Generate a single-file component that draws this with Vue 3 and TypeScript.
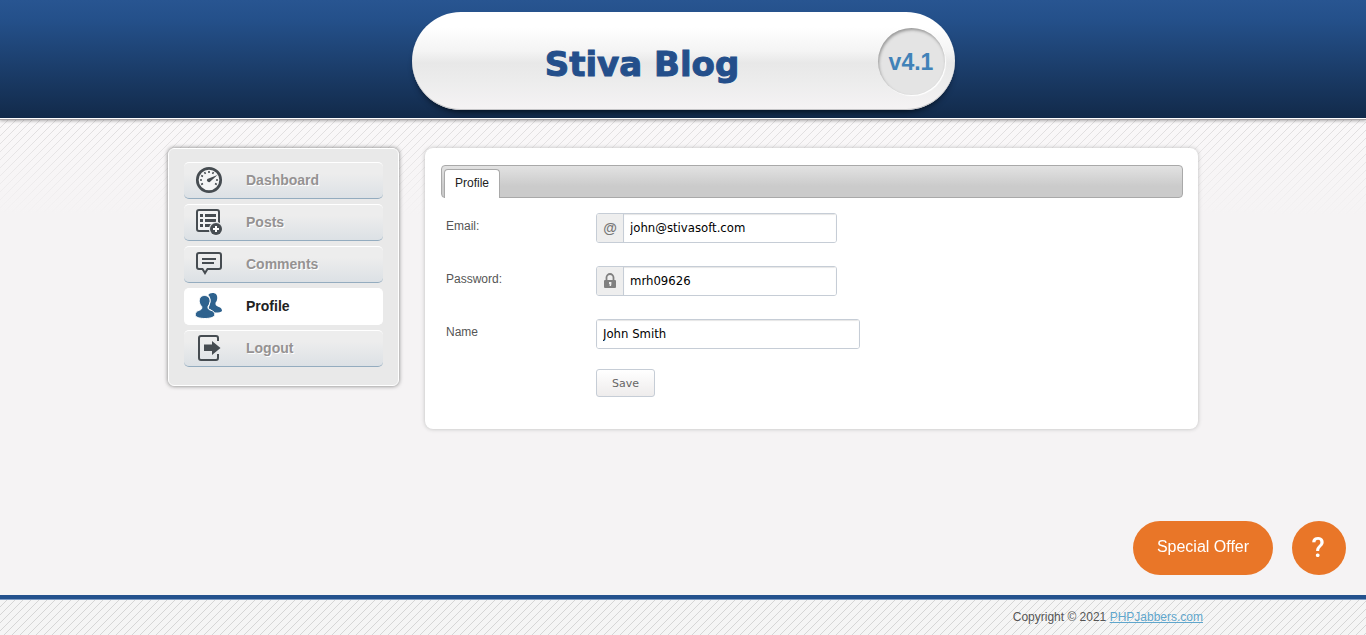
<script setup lang="ts">
import { reactive } from 'vue'

interface NavItem {
  id: string
  label: string
  active?: boolean
}

const navItems: NavItem[] = [
  { id: 'dashboard', label: 'Dashboard' },
  { id: 'posts', label: 'Posts' },
  { id: 'comments', label: 'Comments' },
  { id: 'profile', label: 'Profile', active: true },
  { id: 'logout', label: 'Logout' },
]

const ticks: number[] = [-120, -90, -60, -30, 0, 30, 90, 120]

const form = reactive({
  email: 'john@stivasoft.com',
  password: 'mrh09626',
  name: 'John Smith',
})
</script>

<template>
  <div class="page">
    <header class="header">
      <div class="banner">
        <h1 class="title">Stiva Blog</h1>
        <span class="version">v4.1</span>
      </div>
    </header>

    <div class="content">
      <nav class="sidebar" aria-label="Main menu">
        <a
          v-for="item in navItems"
          :key="item.id"
          :href="'#' + item.id"
          class="nav-item"
          :class="{ active: item.active }"
        >
          <svg v-if="item.id === 'dashboard'" class="nav-icon" viewBox="0 0 28 28" aria-hidden="true">
            <circle cx="14" cy="14" r="11.7" fill="#f4f5f6" stroke="#464c51" stroke-width="2.7" />
            <path
              v-for="t in ticks"
              :key="t"
              d="M14 5v2"
              stroke="#464c51"
              stroke-width="1.6"
              :transform="`rotate(${t} 14 14)`"
            />
            <path d="M12.3 13 22.5 8.900 15.600 15.300A2 2 0 1 1 12.300 13Z" fill="#464c51" />
          </svg>
          <svg v-else-if="item.id === 'posts'" class="nav-icon" viewBox="0 0 28 28" aria-hidden="true">
            <rect x="2" y="2" width="22" height="21" rx="2" fill="#f2f3f4" stroke="#464c51" stroke-width="2" />
            <path d="M5 6h3v3H5zM10 6h11v3H10zM5 11h3v3H5zM10 11h11v3H10zM5 16h3v3H5zM10 16h7v3h-7z" fill="#464c51" />
            <circle cx="21" cy="21" r="7.2" fill="#e4e6e8" />
            <circle cx="21" cy="21" r="6" fill="#464c51" />
            <path d="M21 18v6M18 21h6" stroke="#fff" stroke-width="2" />
          </svg>
          <svg v-else-if="item.id === 'comments'" class="nav-icon" viewBox="0 0 28 28" aria-hidden="true">
            <path
              d="M4 3h20a2 2 0 0 1 2 2v12a2 2 0 0 1-2 2H12.500l-2.500 4-2.500-4H4a2 2 0 0 1-2-2V5a2 2 0 0 1 2-2Z"
              fill="none"
              stroke="#464c51"
              stroke-width="2"
            />
            <path d="M7 9h14M7 13h12" stroke="#464c51" stroke-width="2" />
          </svg>
          <svg v-else-if="item.id === 'profile'" class="nav-icon" viewBox="0 0 28 28" aria-hidden="true">
            <path
              d="M17.500 1c3.500 0 5 2.200 4.700 5.500-.2 2-.7 3-1.700 4.300-.3 2.400.5 3.200 2.700 3.900 3 .9 3.800 2.300 3.800 4.300-1.300 1.300-4.500 1.900-8.500 1.500-1.500-2.600-3-3.200-5-4 .3-2 1.800-4 2-7 .2-2.800-.5-5-2.200-6.500C14 1.700 15.600 1 17.500 1Z"
              fill="#2e628e"
            />
            <path
              d="M9.500 3.500c3.800 0 5.800 2.500 5.500 6-.2 2-.9 3.500-2 5-.3 2.400.6 3 3 3.800 2.700.9 4 2.300 3.800 4.700-.1 2.200-4.800 3.500-9.800 3.500S.2 25.400.2 23c0-2.500 1.300-3.800 4-4.700 2.300-.8 3-1.600 2.500-3.800-1.500-1.500-2.200-3-2.400-5C4 6 5.800 3.500 9.500 3.500Z"
              fill="#2e628e"
              stroke="#fff"
              stroke-width="1"
            />
          </svg>
          <svg v-else class="nav-icon" viewBox="0 0 28 28" aria-hidden="true">
            <path
              d="M23 7V4a2 2 0 0 0-2-2H6a2 2 0 0 0-2 2v20a2 2 0 0 0 2 2h15a2 2 0 0 0 2-2v-4"
              fill="none"
              stroke="#464c51"
              stroke-width="2"
            />
            <path d="M9 10.500h8V7l8.500 7L17 21v-4H9Z" fill="#464c51" />
          </svg>
          <span>{{ item.label }}</span>
        </a>
      </nav>

      <main class="panel">
        <div class="tabs" role="tablist">
          <button type="button" class="tab" role="tab" aria-selected="true">Profile</button>
        </div>
        <form class="form" @submit.prevent>
          <div class="row">
            <label for="email">Email:</label>
            <div class="group">
              <span class="addon at" aria-hidden="true">@</span>
              <input id="email" v-model="form.email" type="text" />
            </div>
          </div>
          <div class="row">
            <label for="password">Password:</label>
            <div class="group">
              <span class="addon">
                <svg class="lock" viewBox="0 0 12 16" aria-hidden="true">
                  <path d="M2.500 7V4.500a3.500 3.500 0 0 1 7 0V7" fill="none" stroke="#808080" stroke-width="1.800" />
                  <rect x="0" y="7" width="12" height="8" rx="1" fill="#808080" />
                  <path d="M5 9h2.400v2L7 13H5.600V11H5Z" fill="#eee" />
                </svg>
              </span>
              <input id="password" v-model="form.password" type="text" />
            </div>
          </div>
          <div class="row">
            <label for="name">Name</label>
            <div class="group wide">
              <input id="name" v-model="form.name" type="text" />
            </div>
          </div>
          <button type="submit" class="save">Save</button>
        </form>
      </main>
    </div>

    <footer class="footer">
      <p class="copyright">Copyright © 2021 <a href="#phpjabbers">PHPJabbers.com</a></p>
    </footer>

    <div class="floating">
      <button type="button" class="offer">Special Offer</button>
      <button type="button" class="help" aria-label="Help">?</button>
    </div>
  </div>
</template>

<style>
body {
  margin: 0;
  background: #f5f3f4;
}
</style>

<style scoped>
* {
  box-sizing: border-box;
}

.page {
  position: relative;
  display: flex;
  flex-direction: column;
  min-height: 100vh;
  font-family: "Liberation Sans", Arial, sans-serif;
  font-size: 12px;
  color: #555;
  background:
    linear-gradient(rgba(250, 248, 249, 0) 118px, #f5f3f4 216px),
    linear-gradient(135deg, transparent 46%, #dedcdd 46%, #dedcdd 54%, transparent 54%) 0 0 / 8px 8px,
    #faf8f9;
}

.header {
  display: flex;
  justify-content: center;
  padding-top: 12px;
  height: 119px;
  background: linear-gradient(#285591, #24508a 20px, #122a4a 118px);
  border-bottom: 1px solid #fff;
  box-shadow: 0 1px 0 #aaa4a6, 0 2px 3px rgba(0, 0, 0, 0.3);
}

.banner {
  position: relative;
  display: flex;
  align-items: center;
  justify-content: center;
  width: 543px;
  max-width: 100%;
  height: 98px;
  padding-right: 82px;
  border-radius: 49px;
  background: linear-gradient(#fff 15%, #f4f4f4 40%, #e8e8e8 52%, #ececec 70%, #f5f3f4);
  box-shadow: inset 0 -1px 0 #c4c4c6, 0 5px 7px -4px #000a14;
}

.title {
  margin: 0;
  padding-top: 6px;
  font-family: "DejaVu Sans", Verdana, sans-serif;
  font-weight: bold;
  font-size: 34px;
  line-height: 40px;
  color: #244f8b;
  -webkit-text-stroke: 1px #244f8b;
}

.version {
  position: absolute;
  top: 16px;
  right: 10px;
  width: 67px;
  height: 67px;
  border-radius: 50%;
  background: #e4e4e4;
  box-shadow: inset 1px 2px 3px #999, 1px 1px 1px #fff;
  font-size: 23px;
  font-weight: bold;
  line-height: 68px;
  text-align: center;
  color: #4182b8;
}

.content {
  display: flex;
  align-items: flex-start;
  gap: 26px;
  width: 100%;
  max-width: 1030px;
  margin: 29px auto 0;
}

.sidebar {
  display: flex;
  flex-direction: column;
  flex: 0 0 231px;
  gap: 5px;
  padding: 13px 15px 18px;
  border: 1px solid #fff;
  border-radius: 6px;
  background: #e9e9e9;
  box-shadow: 0 0 4px #777;
}

.nav-item {
  display: flex;
  align-items: center;
  height: 37px;
  padding-left: 11px;
  padding-bottom: 2px;
  gap: 23px;
  border-top: 1px solid #fff;
  border-bottom: 1px solid #94acbf;
  border-radius: 5px;
  background: linear-gradient(#ededed 30%, #dce1e5);
  color: #959292;
  font-size: 14px;
  font-weight: bold;
  text-decoration: none;
  text-shadow: 1px 1px 0 #fff;
}

.nav-item.active {
  border-color: #fff;
  background: #fff;
  color: #222;
}

.nav-icon {
  width: 28px;
  height: 28px;
}

.panel {
  flex: 1;
  min-width: 0;
  padding: 17px 15px 32px 16px;
  border-radius: 8px;
  background: #fff;
  box-shadow: 0 0 4px #bbb;
}

.tabs {
  display: flex;
  align-items: flex-end;
  height: 33px;
  padding-left: 2px;
  border: 1px solid #a9a9a9;
  border-radius: 4px;
  background: linear-gradient(#e2e2e2, #cbcbcb 65%, #cbcbcb);
}

.tab {
  height: 29px;
  margin-bottom: -1px;
  padding: 0 10px 3px;
  border: 1px solid #a9a9a9;
  border-bottom: 0;
  border-radius: 4px 4px 0 0;
  background: #fff;
  font: 12px "Liberation Sans", Arial, sans-serif;
  color: #222;
}

.form {
  padding: 15px 5px 0;
}

.row {
  display: flex;
  height: 30px;
  margin-bottom: 23px;
}

.row:nth-child(3) {
  margin-bottom: 20px;
}

label {
  flex: 0 0 150px;
  line-height: 26px;
}

.group {
  display: flex;
  width: 241px;
  border: 1px solid #c6cdd6;
  border-radius: 3px;
  overflow: hidden;
}

.group.wide {
  width: 264px;
}

.addon {
  display: flex;
  align-items: center;
  justify-content: center;
  flex: 0 0 27px;
  border-right: 1px solid #c6cdd6;
  background: #eee;
  color: #777;
}

.at {
  font-size: 14px;
  font-weight: bold;
}

.lock {
  width: 12px;
  height: 16px;
}

input {
  flex: 1;
  min-width: 0;
  padding: 0 6px 2px;
  border: 0;
  outline: 0;
  background: #fff;
  box-shadow: inset 0 1px 1px #e6e6e6;
  font: 13px Tahoma, "DejaVu Sans Condensed", "Noto Sans", sans-serif;
  color: #000;
}

.save {
  display: block;
  height: 28px;
  margin-left: 150px;
  padding: 0 15px;
  border: 1px solid #c6cdd6;
  border-radius: 3px;
  background: linear-gradient(#fff, #eeecec);
  font: 11px "DejaVu Sans", Verdana, sans-serif;
  color: #666;
}

.footer {
  margin-top: auto;
  height: 40px;
  border-top: 4px solid #24518d;
  box-shadow: inset 0 1px 0 #7d9bc4;
  background:
    linear-gradient(135deg, transparent 46%, #d6d6d6 46%, #d6d6d6 54%, transparent 54%) 0 0 / 8px 8px,
    #f5f5f5;
}

.copyright {
  max-width: 1040px;
  margin: 0 auto;
  line-height: 36px;
  text-align: right;
}

.copyright a {
  color: #5fa6cc;
}

.floating {
  position: fixed;
  right: 20px;
  bottom: 60px;
  display: flex;
  gap: 19px;
}

.floating button {
  height: 54px;
  border: 0;
  border-radius: 27px;
  background: #e97628;
  color: #fff;
  font-family: "Liberation Sans", Arial, sans-serif;
}

.floating .offer {
  width: 140px;
  padding: 0 0 3px;
  font-size: 16px;
}

.floating .help {
  width: 54px;
  padding: 0 2px 0 0;
  font-family: Roboto, "Liberation Sans", sans-serif;
  font-size: 27px;
  font-weight: 500;
}
</style>
